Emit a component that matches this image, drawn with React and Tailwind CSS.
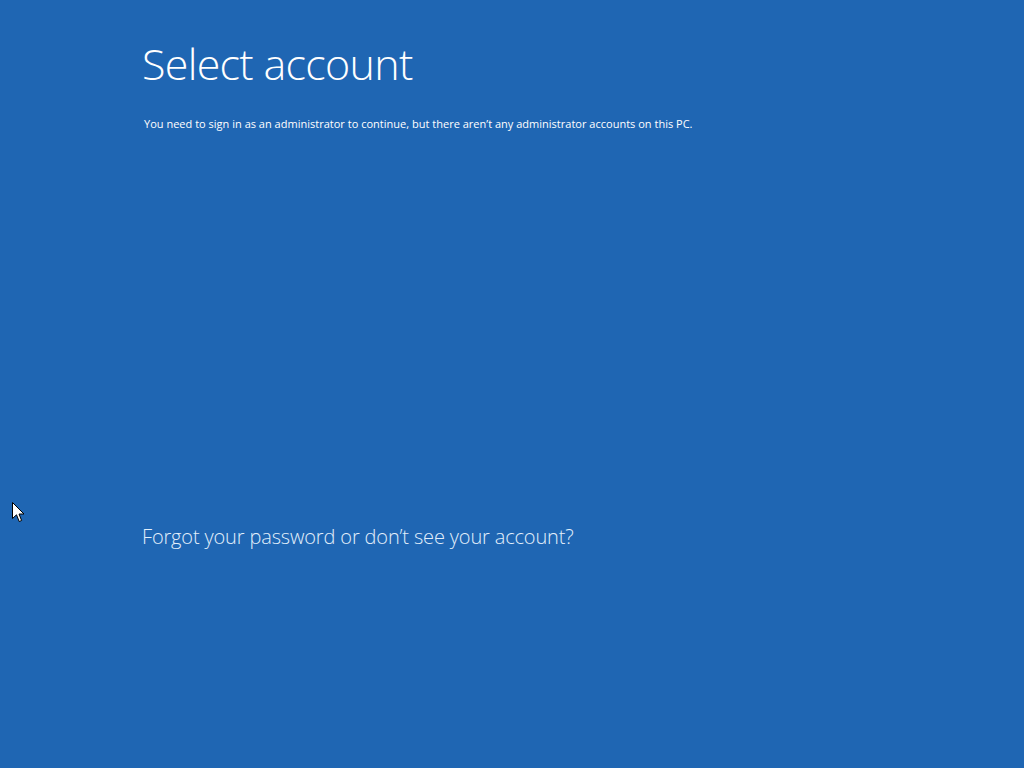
export default function App() {
  return (
    <div
      className="relative h-[768px] w-[1024px] overflow-hidden bg-[#1f66b3] text-white"
      style={{ fontFamily: '"Open Sans", "Noto Sans", sans-serif' }}
    >
      <div className="flex flex-col pl-[142px] pt-[36px]">
        <h1 className="text-[43px] font-light leading-[56px] tracking-[-0.7px]">
          Select account
        </h1>
        <p className="ml-[2px] mt-[24px] text-[11px] leading-[16px] tracking-[0.01px]">
          You need to sign in as an administrator to continue, but there aren’t any
          administrator accounts on this PC.
        </p>
        <a href="#" className="mt-[391px] text-[20px] font-light leading-[28px] tracking-[-0.15px] text-[#e2effb]">
          Forgot your password or don’t see your account?
        </a>
      </div>

      {/* mouse pointer */}
      <svg
        className="absolute left-[12px] top-[502px]"
        width="13"
        height="21"
        viewBox="0 0 13 21"
      >
        <path
          d="M0.5 0.5 L0.5 16.5 L4.5 12.8 L7.2 19.5 L9.6 18.5 L7 12 L12 12 Z"
          fill="#fff"
          stroke="#000"
          strokeWidth="1"
          strokeLinejoin="round"
        />
      </svg>
    </div>
  );
}
